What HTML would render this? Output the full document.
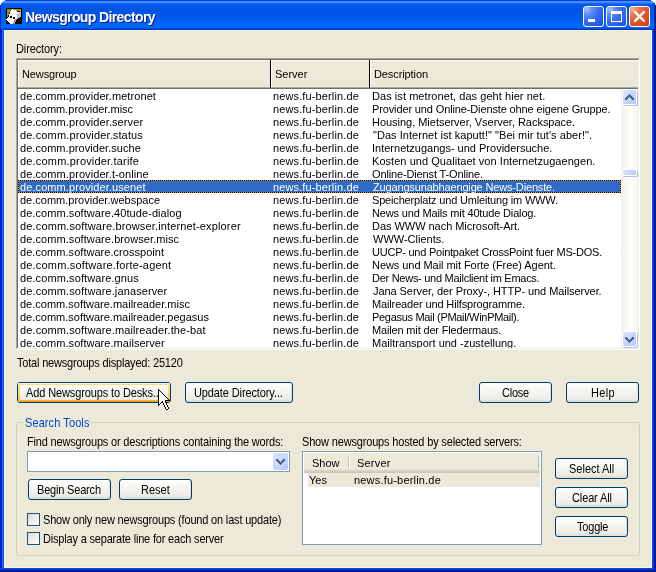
<!DOCTYPE html><html><head><meta charset="utf-8"><style>
html,body{margin:0;padding:0;}body{width:656px;height:572px;position:relative;overflow:hidden;background:#fff;font-family:'Liberation Sans',sans-serif;}
div{box-sizing:border-box;}.t{position:absolute;white-space:pre;will-change:transform;}
.btn{position:absolute;border:1px solid #003C74;border-radius:3px;background:linear-gradient(180deg,#FFFFFF 0%,#F6F5F1 40%,#ECEBE5 85%,#D8D2C6 100%);box-shadow:inset -1px -1px 0 #E3E0D6;}
</style></head><body>
<div style="position:absolute;left:0;top:0;width:656px;height:572px;overflow:hidden;background:#0831D9;">
<div style="position:absolute;left:0;top:0;width:656px;height:30px;background:linear-gradient(180deg,#0A3ED6 0px,#0A3ED6 1px,#3D8FFF 1px,#3D8FFF 3px,#1A6CF2 3px,#0558E8 5px,#0054E3 10px,#0058EA 17px,#0064FB 22px,#0068FF 26px,#0064FA 28px,#0050DE 28px,#0050DE 29px,#0034B8 29px,#0034B8 30px);"></div>
<div style="position:absolute;left:0;top:29px;width:4px;height:540px;background:linear-gradient(90deg,#0010C8 0,#0010C8 1px,#0030D8 1px,#0030D8 2px,#1A6EF0 2px,#1A6EF0 3px,#0850E0 3px);"></div>
<div style="position:absolute;left:0;top:568px;width:656px;height:4px;background:linear-gradient(180deg,#0044F0 0,#0044F0 1px,#0036CC 1px,#0036CC 2px,#0020A0 2px,#0020A0 3px,#001488 3px);"></div>
<div style="position:absolute;left:652px;top:29px;width:4px;height:540px;background:linear-gradient(90deg,#0046F8 0,#0046F8 1px,#0038D8 1px,#0038D8 2px,#0020A8 2px,#0020A8 3px,#001488 3px);"></div>
<div style="position:absolute;left:654px;top:568px;width:1px;height:4px;background:#001C9C;"></div>
<div style="position:absolute;left:655px;top:568px;width:1px;height:4px;background:#001488;"></div>
</div>
<div style="position:absolute;left:0px;top:3px;width:1px;height:27px;background:rgba(0,15,150,0.55);"></div>
<div style="position:absolute;left:655px;top:3px;width:1px;height:27px;background:rgba(0,10,110,0.85);"></div>
<div style="position:absolute;left:654px;top:3px;width:1px;height:27px;background:rgba(0,20,140,0.6);"></div>
<div style="position:absolute;left:0px;top:0px;width:5px;height:1px;background:#fff;"></div>
<div style="position:absolute;left:651px;top:0px;width:5px;height:1px;background:#fff;"></div>
<div style="position:absolute;left:0px;top:1px;width:3px;height:1px;background:#fff;"></div>
<div style="position:absolute;left:653px;top:1px;width:3px;height:1px;background:#fff;"></div>
<div style="position:absolute;left:0px;top:2px;width:2px;height:1px;background:#fff;"></div>
<div style="position:absolute;left:654px;top:2px;width:2px;height:1px;background:#fff;"></div>
<div style="position:absolute;left:0px;top:3px;width:1px;height:2px;background:#fff;"></div>
<div style="position:absolute;left:655px;top:3px;width:1px;height:2px;background:#fff;"></div>
<div style="position:absolute;left:4px;top:30px;width:648px;height:538px;background:#ECE9D8;border:1px solid #FCF7E2;"></div>
<svg style="position:absolute;left:6px;top:8px" width="16" height="16" viewBox="0 0 16 16" shape-rendering="crispEdges"><rect x="0" y="0" width="1" height="1" fill="#000"/><rect x="1" y="0" width="1" height="1" fill="#000"/><rect x="2" y="0" width="1" height="1" fill="#000"/><rect x="3" y="0" width="1" height="1" fill="#000"/><rect x="4" y="0" width="1" height="1" fill="#000"/><rect x="5" y="0" width="1" height="1" fill="#000"/><rect x="6" y="0" width="1" height="1" fill="#000"/><rect x="7" y="0" width="1" height="1" fill="#000"/><rect x="8" y="0" width="1" height="1" fill="#000"/><rect x="9" y="0" width="1" height="1" fill="#000"/><rect x="10" y="0" width="1" height="1" fill="#000"/><rect x="11" y="0" width="1" height="1" fill="#000"/><rect x="12" y="0" width="1" height="1" fill="#000"/><rect x="13" y="0" width="1" height="1" fill="#000"/><rect x="14" y="0" width="1" height="1" fill="#000"/><rect x="15" y="0" width="1" height="1" fill="#000"/><rect x="0" y="1" width="1" height="1" fill="#000"/><rect x="1" y="1" width="1" height="1" fill="#9E9B06"/><rect x="2" y="1" width="1" height="1" fill="#9E9B06"/><rect x="3" y="1" width="1" height="1" fill="#9E9B06"/><rect x="4" y="1" width="1" height="1" fill="#9E9B06"/><rect x="5" y="1" width="1" height="1" fill="#9E9B06"/><rect x="6" y="1" width="1" height="1" fill="#fff"/><rect x="7" y="1" width="1" height="1" fill="#9E9B06"/><rect x="8" y="1" width="1" height="1" fill="#9E9B06"/><rect x="9" y="1" width="1" height="1" fill="#9E9B06"/><rect x="10" y="1" width="1" height="1" fill="#9E9B06"/><rect x="11" y="1" width="1" height="1" fill="#9E9B06"/><rect x="12" y="1" width="1" height="1" fill="#9E9B06"/><rect x="13" y="1" width="1" height="1" fill="#9E9B06"/><rect x="14" y="1" width="1" height="1" fill="#9E9B06"/><rect x="15" y="1" width="1" height="1" fill="#000"/><rect x="0" y="2" width="1" height="1" fill="#000"/><rect x="1" y="2" width="1" height="1" fill="#9E9B06"/><rect x="2" y="2" width="1" height="1" fill="#9E9B06"/><rect x="3" y="2" width="1" height="1" fill="#9E9B06"/><rect x="4" y="2" width="1" height="1" fill="#000"/><rect x="5" y="2" width="1" height="1" fill="#fff"/><rect x="6" y="2" width="1" height="1" fill="#fff"/><rect x="7" y="2" width="1" height="1" fill="#fff"/><rect x="8" y="2" width="1" height="1" fill="#fff"/><rect x="9" y="2" width="1" height="1" fill="#fff"/><rect x="10" y="2" width="1" height="1" fill="#9E9B06"/><rect x="11" y="2" width="1" height="1" fill="#9E9B06"/><rect x="12" y="2" width="1" height="1" fill="#9E9B06"/><rect x="13" y="2" width="1" height="1" fill="#9E9B06"/><rect x="14" y="2" width="1" height="1" fill="#9E9B06"/><rect x="15" y="2" width="1" height="1" fill="#000"/><rect x="0" y="3" width="1" height="1" fill="#000"/><rect x="1" y="3" width="1" height="1" fill="#9E9B06"/><rect x="2" y="3" width="1" height="1" fill="#9E9B06"/><rect x="3" y="3" width="1" height="1" fill="#9E9B06"/><rect x="4" y="3" width="1" height="1" fill="#fff"/><rect x="5" y="3" width="1" height="1" fill="#fff"/><rect x="6" y="3" width="1" height="1" fill="#fff"/><rect x="7" y="3" width="1" height="1" fill="#fff"/><rect x="8" y="3" width="1" height="1" fill="#fff"/><rect x="9" y="3" width="1" height="1" fill="#fff"/><rect x="10" y="3" width="1" height="1" fill="#fff"/><rect x="11" y="3" width="1" height="1" fill="#000"/><rect x="12" y="3" width="1" height="1" fill="#000"/><rect x="13" y="3" width="1" height="1" fill="#000"/><rect x="14" y="3" width="1" height="1" fill="#9E9B06"/><rect x="15" y="3" width="1" height="1" fill="#000"/><rect x="0" y="4" width="1" height="1" fill="#000"/><rect x="1" y="4" width="1" height="1" fill="#9E9B06"/><rect x="2" y="4" width="1" height="1" fill="#9E9B06"/><rect x="3" y="4" width="1" height="1" fill="#000"/><rect x="4" y="4" width="1" height="1" fill="#fff"/><rect x="5" y="4" width="1" height="1" fill="#fff"/><rect x="6" y="4" width="1" height="1" fill="#fff"/><rect x="7" y="4" width="1" height="1" fill="#fff"/><rect x="8" y="4" width="1" height="1" fill="#fff"/><rect x="9" y="4" width="1" height="1" fill="#fff"/><rect x="10" y="4" width="1" height="1" fill="#fff"/><rect x="11" y="4" width="1" height="1" fill="#fff"/><rect x="12" y="4" width="1" height="1" fill="#D6D6D6"/><rect x="13" y="4" width="1" height="1" fill="#D6D6D6"/><rect x="14" y="4" width="1" height="1" fill="#D6D6D6"/><rect x="15" y="4" width="1" height="1" fill="#000"/><rect x="0" y="5" width="1" height="1" fill="#000"/><rect x="1" y="5" width="1" height="1" fill="#9E9B06"/><rect x="2" y="5" width="1" height="1" fill="#9E9B06"/><rect x="3" y="5" width="1" height="1" fill="#000"/><rect x="4" y="5" width="1" height="1" fill="#fff"/><rect x="5" y="5" width="1" height="1" fill="#fff"/><rect x="6" y="5" width="1" height="1" fill="#fff"/><rect x="7" y="5" width="1" height="1" fill="#fff"/><rect x="8" y="5" width="1" height="1" fill="#fff"/><rect x="9" y="5" width="1" height="1" fill="#fff"/><rect x="10" y="5" width="1" height="1" fill="#fff"/><rect x="11" y="5" width="1" height="1" fill="#fff"/><rect x="12" y="5" width="1" height="1" fill="#D6D6D6"/><rect x="13" y="5" width="1" height="1" fill="#BDBDBD"/><rect x="14" y="5" width="1" height="1" fill="#BDBDBD"/><rect x="15" y="5" width="1" height="1" fill="#000"/><rect x="0" y="6" width="1" height="1" fill="#000"/><rect x="1" y="6" width="1" height="1" fill="#9E9B06"/><rect x="2" y="6" width="1" height="1" fill="#9E9B06"/><rect x="3" y="6" width="1" height="1" fill="#fff"/><rect x="4" y="6" width="1" height="1" fill="#fff"/><rect x="5" y="6" width="1" height="1" fill="#fff"/><rect x="6" y="6" width="1" height="1" fill="#fff"/><rect x="7" y="6" width="1" height="1" fill="#fff"/><rect x="8" y="6" width="1" height="1" fill="#fff"/><rect x="9" y="6" width="1" height="1" fill="#fff"/><rect x="10" y="6" width="1" height="1" fill="#fff"/><rect x="11" y="6" width="1" height="1" fill="#BDBDBD"/><rect x="12" y="6" width="1" height="1" fill="#BDBDBD"/><rect x="13" y="6" width="1" height="1" fill="#BDBDBD"/><rect x="14" y="6" width="1" height="1" fill="#BDBDBD"/><rect x="15" y="6" width="1" height="1" fill="#000"/><rect x="0" y="7" width="1" height="1" fill="#000"/><rect x="1" y="7" width="1" height="1" fill="#9E9B06"/><rect x="2" y="7" width="1" height="1" fill="#000"/><rect x="3" y="7" width="1" height="1" fill="#fff"/><rect x="4" y="7" width="1" height="1" fill="#fff"/><rect x="5" y="7" width="1" height="1" fill="#fff"/><rect x="6" y="7" width="1" height="1" fill="#fff"/><rect x="7" y="7" width="1" height="1" fill="#fff"/><rect x="8" y="7" width="1" height="1" fill="#fff"/><rect x="9" y="7" width="1" height="1" fill="#fff"/><rect x="10" y="7" width="1" height="1" fill="#fff"/><rect x="11" y="7" width="1" height="1" fill="#BDBDBD"/><rect x="12" y="7" width="1" height="1" fill="#BDBDBD"/><rect x="13" y="7" width="1" height="1" fill="#BDBDBD"/><rect x="14" y="7" width="1" height="1" fill="#BDBDBD"/><rect x="15" y="7" width="1" height="1" fill="#000"/><rect x="0" y="8" width="1" height="1" fill="#000"/><rect x="1" y="8" width="1" height="1" fill="#9E9B06"/><rect x="2" y="8" width="1" height="1" fill="#000"/><rect x="3" y="8" width="1" height="1" fill="#fff"/><rect x="4" y="8" width="1" height="1" fill="#000"/><rect x="5" y="8" width="1" height="1" fill="#000"/><rect x="6" y="8" width="1" height="1" fill="#fff"/><rect x="7" y="8" width="1" height="1" fill="#fff"/><rect x="8" y="8" width="1" height="1" fill="#fff"/><rect x="9" y="8" width="1" height="1" fill="#fff"/><rect x="10" y="8" width="1" height="1" fill="#fff"/><rect x="11" y="8" width="1" height="1" fill="#BDBDBD"/><rect x="12" y="8" width="1" height="1" fill="#BDBDBD"/><rect x="13" y="8" width="1" height="1" fill="#BDBDBD"/><rect x="14" y="8" width="1" height="1" fill="#BDBDBD"/><rect x="15" y="8" width="1" height="1" fill="#000"/><rect x="0" y="9" width="1" height="1" fill="#000"/><rect x="1" y="9" width="1" height="1" fill="#000"/><rect x="2" y="9" width="1" height="1" fill="#fff"/><rect x="3" y="9" width="1" height="1" fill="#fff"/><rect x="4" y="9" width="1" height="1" fill="#000"/><rect x="5" y="9" width="1" height="1" fill="#000"/><rect x="6" y="9" width="1" height="1" fill="#fff"/><rect x="7" y="9" width="1" height="1" fill="#000"/><rect x="8" y="9" width="1" height="1" fill="#000"/><rect x="9" y="9" width="1" height="1" fill="#fff"/><rect x="10" y="9" width="1" height="1" fill="#fff"/><rect x="11" y="9" width="1" height="1" fill="#BDBDBD"/><rect x="12" y="9" width="1" height="1" fill="#BDBDBD"/><rect x="13" y="9" width="1" height="1" fill="#BDBDBD"/><rect x="14" y="9" width="1" height="1" fill="#000"/><rect x="15" y="9" width="1" height="1" fill="#000"/><rect x="0" y="10" width="1" height="1" fill="#000"/><rect x="1" y="10" width="1" height="1" fill="#fff"/><rect x="2" y="10" width="1" height="1" fill="#fff"/><rect x="3" y="10" width="1" height="1" fill="#fff"/><rect x="4" y="10" width="1" height="1" fill="#fff"/><rect x="5" y="10" width="1" height="1" fill="#fff"/><rect x="6" y="10" width="1" height="1" fill="#fff"/><rect x="7" y="10" width="1" height="1" fill="#000"/><rect x="8" y="10" width="1" height="1" fill="#000"/><rect x="9" y="10" width="1" height="1" fill="#fff"/><rect x="10" y="10" width="1" height="1" fill="#BDBDBD"/><rect x="11" y="10" width="1" height="1" fill="#BDBDBD"/><rect x="12" y="10" width="1" height="1" fill="#000"/><rect x="13" y="10" width="1" height="1" fill="#000"/><rect x="14" y="10" width="1" height="1" fill="#000"/><rect x="15" y="10" width="1" height="1" fill="#000"/><rect x="0" y="11" width="1" height="1" fill="#fff"/><rect x="1" y="11" width="1" height="1" fill="#fff"/><rect x="2" y="11" width="1" height="1" fill="#fff"/><rect x="3" y="11" width="1" height="1" fill="#fff"/><rect x="4" y="11" width="1" height="1" fill="#fff"/><rect x="5" y="11" width="1" height="1" fill="#fff"/><rect x="6" y="11" width="1" height="1" fill="#fff"/><rect x="7" y="11" width="1" height="1" fill="#fff"/><rect x="8" y="11" width="1" height="1" fill="#fff"/><rect x="9" y="11" width="1" height="1" fill="#9A9A9A"/><rect x="10" y="11" width="1" height="1" fill="#9A9A9A"/><rect x="11" y="11" width="1" height="1" fill="#000"/><rect x="12" y="11" width="1" height="1" fill="#000"/><rect x="13" y="11" width="1" height="1" fill="#000"/><rect x="14" y="11" width="1" height="1" fill="#000"/><rect x="15" y="11" width="1" height="1" fill="#000"/><rect x="0" y="12" width="1" height="1" fill="#000"/><rect x="1" y="12" width="1" height="1" fill="#fff"/><rect x="2" y="12" width="1" height="1" fill="#fff"/><rect x="3" y="12" width="1" height="1" fill="#fff"/><rect x="4" y="12" width="1" height="1" fill="#fff"/><rect x="5" y="12" width="1" height="1" fill="#fff"/><rect x="6" y="12" width="1" height="1" fill="#fff"/><rect x="7" y="12" width="1" height="1" fill="#fff"/><rect x="8" y="12" width="1" height="1" fill="#9A9A9A"/><rect x="9" y="12" width="1" height="1" fill="#9A9A9A"/><rect x="10" y="12" width="1" height="1" fill="#000"/><rect x="11" y="12" width="1" height="1" fill="#000"/><rect x="12" y="12" width="1" height="1" fill="#000"/><rect x="13" y="12" width="1" height="1" fill="#000"/><rect x="14" y="12" width="1" height="1" fill="#000"/><rect x="15" y="12" width="1" height="1" fill="#000"/><rect x="0" y="13" width="1" height="1" fill="#000"/><rect x="1" y="13" width="1" height="1" fill="#000"/><rect x="2" y="13" width="1" height="1" fill="#fff"/><rect x="3" y="13" width="1" height="1" fill="#fff"/><rect x="4" y="13" width="1" height="1" fill="#fff"/><rect x="5" y="13" width="1" height="1" fill="#fff"/><rect x="6" y="13" width="1" height="1" fill="#fff"/><rect x="7" y="13" width="1" height="1" fill="#fff"/><rect x="8" y="13" width="1" height="1" fill="#9A9A9A"/><rect x="9" y="13" width="1" height="1" fill="#9A9A9A"/><rect x="10" y="13" width="1" height="1" fill="#000"/><rect x="11" y="13" width="1" height="1" fill="#000"/><rect x="12" y="13" width="1" height="1" fill="#000"/><rect x="13" y="13" width="1" height="1" fill="#000"/><rect x="14" y="13" width="1" height="1" fill="#000"/><rect x="15" y="13" width="1" height="1" fill="#000"/><rect x="0" y="14" width="1" height="1" fill="#000"/><rect x="1" y="14" width="1" height="1" fill="#000"/><rect x="2" y="14" width="1" height="1" fill="#000"/><rect x="3" y="14" width="1" height="1" fill="#fff"/><rect x="4" y="14" width="1" height="1" fill="#fff"/><rect x="5" y="14" width="1" height="1" fill="#fff"/><rect x="6" y="14" width="1" height="1" fill="#fff"/><rect x="7" y="14" width="1" height="1" fill="#9A9A9A"/><rect x="8" y="14" width="1" height="1" fill="#9A9A9A"/><rect x="9" y="14" width="1" height="1" fill="#000"/><rect x="10" y="14" width="1" height="1" fill="#000"/><rect x="11" y="14" width="1" height="1" fill="#000"/><rect x="12" y="14" width="1" height="1" fill="#000"/><rect x="13" y="14" width="1" height="1" fill="#000"/><rect x="14" y="14" width="1" height="1" fill="#000"/><rect x="15" y="14" width="1" height="1" fill="#000"/><rect x="0" y="15" width="1" height="1" fill="#000"/><rect x="1" y="15" width="1" height="1" fill="#000"/><rect x="2" y="15" width="1" height="1" fill="#000"/><rect x="3" y="15" width="1" height="1" fill="#000"/><rect x="4" y="15" width="1" height="1" fill="#fff"/><rect x="5" y="15" width="1" height="1" fill="#fff"/><rect x="6" y="15" width="1" height="1" fill="#fff"/><rect x="7" y="15" width="1" height="1" fill="#9A9A9A"/><rect x="8" y="15" width="1" height="1" fill="#9A9A9A"/><rect x="9" y="15" width="1" height="1" fill="#000"/><rect x="10" y="15" width="1" height="1" fill="#000"/><rect x="11" y="15" width="1" height="1" fill="#000"/><rect x="12" y="15" width="1" height="1" fill="#000"/><rect x="13" y="15" width="1" height="1" fill="#000"/><rect x="14" y="15" width="1" height="1" fill="#000"/><rect x="15" y="15" width="1" height="1" fill="#000"/></svg>
<div class="t" style="left:25px;top:8px;font-size:14px;line-height:18px;color:#fff;font-weight:bold;letter-spacing:-0.611px;text-shadow:1px 1px 0 #0A1883;">Newsgroup Directory</div>
<div style="position:absolute;left:583px;top:6px;width:21px;height:21px;border:1px solid #fff;border-radius:3px;background:radial-gradient(circle at 15% 12%,#A6C4FF 0,#5F8EF8 22%,#3A6CF2 50%,#2A5DEB 75%,#1E4DD6 100%);"><div style="position:absolute;left:4px;top:12px;width:7px;height:3px;background:#fff"></div></div>
<div style="position:absolute;left:606px;top:6px;width:21px;height:21px;border:1px solid #fff;border-radius:3px;background:radial-gradient(circle at 15% 12%,#A6C4FF 0,#5F8EF8 22%,#3A6CF2 50%,#2A5DEB 75%,#1E4DD6 100%);"><div style="position:absolute;left:4px;top:4px;width:11px;height:11px;border:1px solid #fff;border-top-width:3px"></div></div>
<div style="position:absolute;left:629px;top:6px;width:21px;height:21px;border:1px solid #fff;border-radius:3px;background:radial-gradient(circle at 15% 12%,#F5B29A 0,#EA7A55 22%,#E25A30 50%,#DB4A1E 75%,#C43A10 100%);"><svg style="position:absolute;left:4px;top:4px" width="11" height="11" viewBox="0 0 11 11"><path d="M1 1 L10 10 M10 1 L1 10" stroke="#fff" stroke-width="2.4" stroke-linecap="square"/></svg></div>
<div class="t" style="left:16px;top:42px;font-size:11px;line-height:13px;color:#000;font-weight:normal;letter-spacing:-0.111px;transform:scaleY(1.125);transform-origin:0 2px;">Directory:</div>
<div style="position:absolute;left:16px;top:58px;width:624px;height:292px;background:#fff;border-style:solid;border-width:1px;border-color:#ACA899 #FFFFFF #FFFFFF #ACA899;"></div>
<div style="position:absolute;left:17px;top:59px;width:622px;height:290px;border-style:solid;border-width:1px;border-color:#716F64 #F1EFE2 #F1EFE2 #716F64;"></div>
<div style="position:absolute;left:18px;top:60px;width:620px;height:29px;background:#ECE9D8;border-top:1px solid #fff;border-left:1px solid #fff;"></div>
<div style="position:absolute;left:18px;top:87px;width:620px;height:1px;background:#ACA899;"></div>
<div style="position:absolute;left:18px;top:88px;width:620px;height:1px;background:#716F64;"></div>
<div style="position:absolute;left:270px;top:60px;width:1px;height:28px;background:#000;"></div>
<div style="position:absolute;left:271px;top:60px;width:1px;height:27px;background:#fff;"></div>
<div style="position:absolute;left:369px;top:60px;width:1px;height:28px;background:#000;"></div>
<div style="position:absolute;left:370px;top:60px;width:1px;height:27px;background:#fff;"></div>
<div class="t" style="left:22px;top:68px;font-size:11px;line-height:13px;color:#000;font-weight:normal;letter-spacing:-0.125px;">Newsgroup</div>
<div class="t" style="left:275px;top:68px;font-size:11px;line-height:13px;color:#000;font-weight:normal;letter-spacing:0.000px;">Server</div>
<div class="t" style="left:374px;top:68px;font-size:11px;line-height:13px;color:#000;font-weight:normal;letter-spacing:-0.100px;">Description</div>
<div class="t" style="left:20px;top:90px;font-size:11px;line-height:13px;color:#000;font-weight:normal;letter-spacing:0.083px;">de.comm.provider.metronet</div>
<div class="t" style="left:273px;top:90px;font-size:11px;line-height:13px;color:#000;font-weight:normal;letter-spacing:0.125px;">news.fu-berlin.de</div>
<div class="t" style="left:372px;top:90px;font-size:11px;line-height:13px;color:#000;font-weight:normal;letter-spacing:0.057px;">Das ist metronet, das geht hier net.</div>
<div class="t" style="left:20px;top:103px;font-size:11px;line-height:13px;color:#000;font-weight:normal;letter-spacing:0.000px;">de.comm.provider.misc</div>
<div class="t" style="left:273px;top:103px;font-size:11px;line-height:13px;color:#000;font-weight:normal;letter-spacing:0.125px;">news.fu-berlin.de</div>
<div class="t" style="left:372px;top:103px;font-size:11px;line-height:13px;color:#000;font-weight:normal;letter-spacing:-0.130px;">Provider und Online-Dienste ohne eigene Gruppe.</div>
<div class="t" style="left:20px;top:116px;font-size:11px;line-height:13px;color:#000;font-weight:normal;letter-spacing:0.091px;">de.comm.provider.server</div>
<div class="t" style="left:273px;top:116px;font-size:11px;line-height:13px;color:#000;font-weight:normal;letter-spacing:0.125px;">news.fu-berlin.de</div>
<div class="t" style="left:372px;top:116px;font-size:11px;line-height:13px;color:#000;font-weight:normal;letter-spacing:-0.026px;">Housing, Mietserver, Vserver, Rackspace.</div>
<div class="t" style="left:20px;top:129px;font-size:11px;line-height:13px;color:#000;font-weight:normal;letter-spacing:0.136px;">de.comm.provider.status</div>
<div class="t" style="left:273px;top:129px;font-size:11px;line-height:13px;color:#000;font-weight:normal;letter-spacing:0.125px;">news.fu-berlin.de</div>
<div class="t" style="left:373px;top:129px;font-size:11px;line-height:13px;color:#000;font-weight:normal;letter-spacing:0.042px;">"Das Internet ist kaputt!" "Bei mir tut's aber!".</div>
<div class="t" style="left:20px;top:142px;font-size:11px;line-height:13px;color:#000;font-weight:normal;letter-spacing:0.048px;">de.comm.provider.suche</div>
<div class="t" style="left:273px;top:142px;font-size:11px;line-height:13px;color:#000;font-weight:normal;letter-spacing:0.125px;">news.fu-berlin.de</div>
<div class="t" style="left:372px;top:142px;font-size:11px;line-height:13px;color:#000;font-weight:normal;letter-spacing:0.000px;">Internetzugangs- und Providersuche.</div>
<div class="t" style="left:20px;top:155px;font-size:11px;line-height:13px;color:#000;font-weight:normal;letter-spacing:0.182px;">de.comm.provider.tarife</div>
<div class="t" style="left:273px;top:155px;font-size:11px;line-height:13px;color:#000;font-weight:normal;letter-spacing:0.125px;">news.fu-berlin.de</div>
<div class="t" style="left:372px;top:155px;font-size:11px;line-height:13px;color:#000;font-weight:normal;letter-spacing:0.048px;">Kosten und Qualitaet von Internetzugaengen.</div>
<div class="t" style="left:20px;top:168px;font-size:11px;line-height:13px;color:#000;font-weight:normal;letter-spacing:0.083px;">de.comm.provider.t-online</div>
<div class="t" style="left:273px;top:168px;font-size:11px;line-height:13px;color:#000;font-weight:normal;letter-spacing:0.125px;">news.fu-berlin.de</div>
<div class="t" style="left:372px;top:168px;font-size:11px;line-height:13px;color:#000;font-weight:normal;letter-spacing:-0.136px;">Online-Dienst T-Online.</div>
<div style="position:absolute;left:18px;top:180px;width:603px;height:13px;background:#316AC5;"></div>
<div style="position:absolute;left:18px;top:180px;width:603px;height:13px;background:repeating-linear-gradient(90deg,#000 0 1px,#CE953A 1px 2px) top/100% 1px no-repeat,repeating-linear-gradient(90deg,#000 0 1px,#CE953A 1px 2px) bottom/100% 1px no-repeat,repeating-linear-gradient(180deg,#000 0 1px,#CE953A 1px 2px) left/1px 100% no-repeat,repeating-linear-gradient(180deg,#000 0 1px,#CE953A 1px 2px) right/1px 100% no-repeat;"></div>
<div class="t" style="left:20px;top:181px;font-size:11px;line-height:13px;color:#fff;font-weight:normal;letter-spacing:0.091px;">de.comm.provider.usenet</div>
<div class="t" style="left:273px;top:181px;font-size:11px;line-height:13px;color:#fff;font-weight:normal;letter-spacing:0.125px;">news.fu-berlin.de</div>
<div class="t" style="left:373px;top:181px;font-size:11px;line-height:13px;color:#fff;font-weight:normal;letter-spacing:-0.156px;">Zugangsunabhaengige News-Dienste.</div>
<div class="t" style="left:20px;top:194px;font-size:11px;line-height:13px;color:#000;font-weight:normal;letter-spacing:0.000px;">de.comm.provider.webspace</div>
<div class="t" style="left:273px;top:194px;font-size:11px;line-height:13px;color:#000;font-weight:normal;letter-spacing:0.125px;">news.fu-berlin.de</div>
<div class="t" style="left:372px;top:194px;font-size:11px;line-height:13px;color:#000;font-weight:normal;letter-spacing:-0.176px;">Speicherplatz und Umleitung im WWW.</div>
<div class="t" style="left:20px;top:207px;font-size:11px;line-height:13px;color:#000;font-weight:normal;letter-spacing:0.069px;">de.comm.software.40tude-dialog</div>
<div class="t" style="left:273px;top:207px;font-size:11px;line-height:13px;color:#000;font-weight:normal;letter-spacing:0.125px;">news.fu-berlin.de</div>
<div class="t" style="left:372px;top:207px;font-size:11px;line-height:13px;color:#000;font-weight:normal;letter-spacing:-0.156px;">News und Mails mit 40tude Dialog.</div>
<div class="t" style="left:20px;top:220px;font-size:11px;line-height:13px;color:#000;font-weight:normal;letter-spacing:0.146px;">de.comm.software.browser.internet-explorer</div>
<div class="t" style="left:273px;top:220px;font-size:11px;line-height:13px;color:#000;font-weight:normal;letter-spacing:0.125px;">news.fu-berlin.de</div>
<div class="t" style="left:372px;top:220px;font-size:11px;line-height:13px;color:#000;font-weight:normal;letter-spacing:-0.038px;">Das WWW nach Microsoft-Art.</div>
<div class="t" style="left:20px;top:233px;font-size:11px;line-height:13px;color:#000;font-weight:normal;letter-spacing:0.071px;">de.comm.software.browser.misc</div>
<div class="t" style="left:273px;top:233px;font-size:11px;line-height:13px;color:#000;font-weight:normal;letter-spacing:0.125px;">news.fu-berlin.de</div>
<div class="t" style="left:373px;top:233px;font-size:11px;line-height:13px;color:#000;font-weight:normal;letter-spacing:0.000px;">WWW-Clients.</div>
<div class="t" style="left:20px;top:246px;font-size:11px;line-height:13px;color:#000;font-weight:normal;letter-spacing:0.038px;">de.comm.software.crosspoint</div>
<div class="t" style="left:273px;top:246px;font-size:11px;line-height:13px;color:#000;font-weight:normal;letter-spacing:0.125px;">news.fu-berlin.de</div>
<div class="t" style="left:372px;top:246px;font-size:11px;line-height:13px;color:#000;font-weight:normal;letter-spacing:-0.233px;">UUCP- und Pointpaket CrossPoint fuer MS-DOS.</div>
<div class="t" style="left:20px;top:259px;font-size:11px;line-height:13px;color:#000;font-weight:normal;letter-spacing:0.185px;">de.comm.software.forte-agent</div>
<div class="t" style="left:273px;top:259px;font-size:11px;line-height:13px;color:#000;font-weight:normal;letter-spacing:0.125px;">news.fu-berlin.de</div>
<div class="t" style="left:372px;top:259px;font-size:11px;line-height:13px;color:#000;font-weight:normal;letter-spacing:-0.056px;">News und Mail mit Forte (Free) Agent.</div>
<div class="t" style="left:20px;top:272px;font-size:11px;line-height:13px;color:#000;font-weight:normal;letter-spacing:0.100px;">de.comm.software.gnus</div>
<div class="t" style="left:273px;top:272px;font-size:11px;line-height:13px;color:#000;font-weight:normal;letter-spacing:0.125px;">news.fu-berlin.de</div>
<div class="t" style="left:372px;top:272px;font-size:11px;line-height:13px;color:#000;font-weight:normal;letter-spacing:-0.273px;">Der News- und Mailclient im Emacs.</div>
<div class="t" style="left:20px;top:285px;font-size:11px;line-height:13px;color:#000;font-weight:normal;letter-spacing:0.115px;">de.comm.software.janaserver</div>
<div class="t" style="left:273px;top:285px;font-size:11px;line-height:13px;color:#000;font-weight:normal;letter-spacing:0.125px;">news.fu-berlin.de</div>
<div class="t" style="left:373px;top:285px;font-size:11px;line-height:13px;color:#000;font-weight:normal;letter-spacing:-0.067px;">Jana Server, der Proxy-, HTTP- und Mailserver.</div>
<div class="t" style="left:20px;top:298px;font-size:11px;line-height:13px;color:#000;font-weight:normal;letter-spacing:0.000px;">de.comm.software.mailreader.misc</div>
<div class="t" style="left:273px;top:298px;font-size:11px;line-height:13px;color:#000;font-weight:normal;letter-spacing:0.125px;">news.fu-berlin.de</div>
<div class="t" style="left:372px;top:298px;font-size:11px;line-height:13px;color:#000;font-weight:normal;letter-spacing:-0.138px;">Mailreader und Hilfsprogramme.</div>
<div class="t" style="left:20px;top:311px;font-size:11px;line-height:13px;color:#000;font-weight:normal;letter-spacing:0.000px;">de.comm.software.mailreader.pegasus</div>
<div class="t" style="left:273px;top:311px;font-size:11px;line-height:13px;color:#000;font-weight:normal;letter-spacing:0.125px;">news.fu-berlin.de</div>
<div class="t" style="left:372px;top:311px;font-size:11px;line-height:13px;color:#000;font-weight:normal;letter-spacing:-0.310px;">Pegasus Mail (PMail/WinPMail).</div>
<div class="t" style="left:20px;top:324px;font-size:11px;line-height:13px;color:#000;font-weight:normal;letter-spacing:0.118px;">de.comm.software.mailreader.the-bat</div>
<div class="t" style="left:273px;top:324px;font-size:11px;line-height:13px;color:#000;font-weight:normal;letter-spacing:0.125px;">news.fu-berlin.de</div>
<div class="t" style="left:372px;top:324px;font-size:11px;line-height:13px;color:#000;font-weight:normal;letter-spacing:-0.160px;">Mailen mit der Fledermaus.</div>
<div class="t" style="left:20px;top:337px;font-size:11px;line-height:13px;color:#000;font-weight:normal;letter-spacing:0.038px;">de.comm.software.mailserver</div>
<div class="t" style="left:273px;top:337px;font-size:11px;line-height:13px;color:#000;font-weight:normal;letter-spacing:0.125px;">news.fu-berlin.de</div>
<div class="t" style="left:372px;top:337px;font-size:11px;line-height:13px;color:#000;font-weight:normal;letter-spacing:0.000px;">Mailtransport und -zustellung.</div>
<div style="position:absolute;left:17px;top:348px;width:622px;height:1px;background:#F1EFE2;"></div>
<div style="position:absolute;left:16px;top:349px;width:624px;height:1px;background:#FFFFFF;"></div>
<div style="position:absolute;left:621px;top:89px;width:17px;height:259px;background:linear-gradient(90deg,#F3F1EC 0,#FEFEFB 60%,#F5F4EF 100%);"></div>
<div style="position:absolute;left:622px;top:89px;width:15px;height:16px;border:1px solid #fff;border-radius:2px;background:linear-gradient(135deg,#DCE6FD 0%,#C6D6FC 50%,#B6CAFA 100%);box-shadow:1px 1px 0 #A9C0EE;"></div>
<svg style="position:absolute;left:625px;top:94px" width="9" height="6" viewBox="0 0 9 6" shape-rendering="crispEdges" fill="#4D6185"><rect x="4" y="0" width="1" height="1"/><rect x="3" y="1" width="1" height="1"/><rect x="4" y="1" width="1" height="1"/><rect x="5" y="1" width="1" height="1"/><rect x="2" y="2" width="1" height="1"/><rect x="3" y="2" width="1" height="1"/><rect x="4" y="2" width="1" height="1"/><rect x="5" y="2" width="1" height="1"/><rect x="6" y="2" width="1" height="1"/><rect x="1" y="3" width="1" height="1"/><rect x="2" y="3" width="1" height="1"/><rect x="3" y="3" width="1" height="1"/><rect x="5" y="3" width="1" height="1"/><rect x="6" y="3" width="1" height="1"/><rect x="7" y="3" width="1" height="1"/><rect x="0" y="4" width="1" height="1"/><rect x="1" y="4" width="1" height="1"/><rect x="2" y="4" width="1" height="1"/><rect x="6" y="4" width="1" height="1"/><rect x="7" y="4" width="1" height="1"/><rect x="8" y="4" width="1" height="1"/><rect x="0" y="5" width="1" height="1"/><rect x="1" y="5" width="1" height="1"/><rect x="7" y="5" width="1" height="1"/><rect x="8" y="5" width="1" height="1"/></svg>
<div style="position:absolute;left:622px;top:331px;width:15px;height:16px;border:1px solid #fff;border-radius:2px;background:linear-gradient(135deg,#DCE6FD 0%,#C6D6FC 50%,#B6CAFA 100%);box-shadow:1px 1px 0 #A9C0EE;"></div>
<svg style="position:absolute;left:625px;top:337px" width="9" height="6" viewBox="0 0 9 6" shape-rendering="crispEdges" fill="#4D6185"><rect x="0" y="0" width="1" height="1"/><rect x="1" y="0" width="1" height="1"/><rect x="7" y="0" width="1" height="1"/><rect x="8" y="0" width="1" height="1"/><rect x="0" y="1" width="1" height="1"/><rect x="1" y="1" width="1" height="1"/><rect x="2" y="1" width="1" height="1"/><rect x="6" y="1" width="1" height="1"/><rect x="7" y="1" width="1" height="1"/><rect x="8" y="1" width="1" height="1"/><rect x="1" y="2" width="1" height="1"/><rect x="2" y="2" width="1" height="1"/><rect x="3" y="2" width="1" height="1"/><rect x="5" y="2" width="1" height="1"/><rect x="6" y="2" width="1" height="1"/><rect x="7" y="2" width="1" height="1"/><rect x="2" y="3" width="1" height="1"/><rect x="3" y="3" width="1" height="1"/><rect x="4" y="3" width="1" height="1"/><rect x="5" y="3" width="1" height="1"/><rect x="6" y="3" width="1" height="1"/><rect x="3" y="4" width="1" height="1"/><rect x="4" y="4" width="1" height="1"/><rect x="5" y="4" width="1" height="1"/><rect x="4" y="5" width="1" height="1"/></svg>
<div style="position:absolute;left:622px;top:169px;width:15px;height:7px;border:1px solid #fff;border-radius:2px;background:linear-gradient(135deg,#D4E0FD,#BACDFB);box-shadow:1px 1px 0 #A9C0EE;"></div>
<div class="t" style="left:17px;top:356px;font-size:11px;line-height:13px;color:#000;font-weight:normal;letter-spacing:-0.188px;transform:scaleY(1.125);transform-origin:0 2px;">Total newsgroups displayed: 25120</div>
<div class="btn" style="left:17px;top:382px;width:154px;height:21px;"></div>
<div style="position:absolute;left:18px;top:383px;width:152px;height:1px;background:#FFF0CF;border-radius:2px 2px 0 0"></div>
<div style="position:absolute;left:18px;top:384px;width:152px;height:1px;background:#FCD88C;"></div>
<div style="position:absolute;left:18px;top:384px;width:2px;height:17px;background:linear-gradient(180deg,#FCE2A4,#F6BE52);"></div>
<div style="position:absolute;left:168px;top:384px;width:2px;height:17px;background:linear-gradient(180deg,#FCE2A4,#F6BE52);"></div>
<div style="position:absolute;left:18px;top:400px;width:152px;height:1px;background:#F8B330;"></div>
<div style="position:absolute;left:18px;top:401px;width:152px;height:1px;background:#E5A01A;border-radius:0 0 2px 2px"></div>
<div class="t" style="left:26px;top:386px;font-size:11px;line-height:13px;color:#000;font-weight:normal;letter-spacing:-0.120px;transform:scaleY(1.125);transform-origin:0 2px;">Add Newsgroups to Desks...</div>
<div class="btn" style="left:185px;top:382px;width:108px;height:21px;"></div>
<div class="t" style="left:194px;top:386px;font-size:11px;line-height:13px;color:#000;font-weight:normal;letter-spacing:-0.111px;transform:scaleY(1.125);transform-origin:0 2px;">Update Directory...</div>
<div class="btn" style="left:479px;top:382px;width:73px;height:21px;"></div>
<div class="t" style="left:502px;top:386px;font-size:11px;line-height:13px;color:#000;font-weight:normal;letter-spacing:-0.250px;transform:scaleY(1.125);transform-origin:0 2px;">Close</div>
<div class="btn" style="left:566px;top:382px;width:73px;height:21px;"></div>
<div class="t" style="left:591px;top:386px;font-size:11px;line-height:13px;color:#000;font-weight:normal;letter-spacing:0.333px;transform:scaleY(1.125);transform-origin:0 2px;">Help</div>
<div style="position:absolute;left:16px;top:422px;width:624px;height:134px;border:1px solid #D0D0BF;border-radius:3px;"></div>
<div style="position:absolute;left:23px;top:418px;width:67px;height:11px;background:#ECE9D8;"></div>
<div class="t" style="left:25px;top:416px;font-size:11px;line-height:13px;color:#0046D5;font-weight:normal;letter-spacing:0.091px;transform:scaleY(1.125);transform-origin:0 2px;">Search Tools</div>
<div class="t" style="left:27px;top:435px;font-size:11px;line-height:13px;color:#000;font-weight:normal;letter-spacing:-0.173px;transform:scaleY(1.125);transform-origin:0 2px;">Find newsgroups or descriptions containing the words:</div>
<div style="position:absolute;left:27px;top:451px;width:263px;height:21px;background:#fff;border:1px solid #7F9DB9;"></div>
<div style="position:absolute;left:273px;top:453px;width:15px;height:17px;border-radius:2px;background:linear-gradient(135deg,#DCE6FD 0%,#C6D6FC 50%,#B6CAFA 100%);"></div>
<svg style="position:absolute;left:276px;top:459px" width="9" height="6" viewBox="0 0 9 6" shape-rendering="crispEdges" fill="#4D6185"><rect x="0" y="0" width="1" height="1"/><rect x="1" y="0" width="1" height="1"/><rect x="7" y="0" width="1" height="1"/><rect x="8" y="0" width="1" height="1"/><rect x="0" y="1" width="1" height="1"/><rect x="1" y="1" width="1" height="1"/><rect x="2" y="1" width="1" height="1"/><rect x="6" y="1" width="1" height="1"/><rect x="7" y="1" width="1" height="1"/><rect x="8" y="1" width="1" height="1"/><rect x="1" y="2" width="1" height="1"/><rect x="2" y="2" width="1" height="1"/><rect x="3" y="2" width="1" height="1"/><rect x="5" y="2" width="1" height="1"/><rect x="6" y="2" width="1" height="1"/><rect x="7" y="2" width="1" height="1"/><rect x="2" y="3" width="1" height="1"/><rect x="3" y="3" width="1" height="1"/><rect x="4" y="3" width="1" height="1"/><rect x="5" y="3" width="1" height="1"/><rect x="6" y="3" width="1" height="1"/><rect x="3" y="4" width="1" height="1"/><rect x="4" y="4" width="1" height="1"/><rect x="5" y="4" width="1" height="1"/><rect x="4" y="5" width="1" height="1"/></svg>
<div class="btn" style="left:28px;top:479px;width:83px;height:21px;"></div>
<div class="t" style="left:37px;top:483px;font-size:11px;line-height:13px;color:#000;font-weight:normal;letter-spacing:-0.182px;transform:scaleY(1.125);transform-origin:0 2px;">Begin Search</div>
<div class="btn" style="left:119px;top:479px;width:73px;height:21px;"></div>
<div class="t" style="left:141px;top:483px;font-size:11px;line-height:13px;color:#000;font-weight:normal;letter-spacing:0.000px;transform:scaleY(1.125);transform-origin:0 2px;">Reset</div>
<div style="position:absolute;left:27px;top:513px;width:13px;height:13px;border:1px solid #1C5180;background:linear-gradient(135deg,#DCDCD7 0%,#F0F0EA 60%,#FFFFFF 100%);"></div>
<div class="t" style="left:43px;top:513px;font-size:11px;line-height:13px;color:#000;font-weight:normal;letter-spacing:-0.174px;transform:scaleY(1.125);transform-origin:0 2px;">Show only new newsgroups (found on last update)</div>
<div style="position:absolute;left:27px;top:532px;width:13px;height:13px;border:1px solid #1C5180;background:linear-gradient(135deg,#DCDCD7 0%,#F0F0EA 60%,#FFFFFF 100%);"></div>
<div class="t" style="left:43px;top:532px;font-size:11px;line-height:13px;color:#000;font-weight:normal;letter-spacing:-0.184px;transform:scaleY(1.125);transform-origin:0 2px;">Display a separate line for each server</div>
<div class="t" style="left:302px;top:435px;font-size:11px;line-height:13px;color:#000;font-weight:normal;letter-spacing:-0.167px;transform:scaleY(1.125);transform-origin:0 2px;">Show newsgroups hosted by selected servers:</div>
<div style="position:absolute;left:302px;top:451px;width:240px;height:94px;background:#fff;border:1px solid #7F9DB9;"></div>
<div style="position:absolute;left:304px;top:453px;width:236px;height:20px;background:linear-gradient(180deg,#EBEADB 0,#EBEADB 16px,#E2DECD 17px,#D6D2C2 18px,#CBC7B8 19px);"></div>
<div style="position:absolute;left:348px;top:456px;width:1px;height:13px;background:#C7C5B2;"></div>
<div style="position:absolute;left:349px;top:456px;width:1px;height:13px;background:#fff;"></div>
<div style="position:absolute;left:538px;top:456px;width:1px;height:13px;background:#C7C5B2;"></div>
<div class="t" style="left:312px;top:457px;font-size:11px;line-height:13px;color:#000;font-weight:normal;letter-spacing:0.000px;">Show</div>
<div class="t" style="left:357px;top:457px;font-size:11px;line-height:13px;color:#000;font-weight:normal;letter-spacing:0.200px;">Server</div>
<div style="position:absolute;left:308px;top:473px;width:232px;height:14px;background:#ECE9D8;"></div>
<div class="t" style="left:309px;top:474px;font-size:11px;line-height:13px;color:#000;font-weight:normal;letter-spacing:0.000px;">Yes</div>
<div class="t" style="left:354px;top:474px;font-size:11px;line-height:13px;color:#000;font-weight:normal;letter-spacing:0.188px;">news.fu-berlin.de</div>
<div class="btn" style="left:555px;top:458px;width:73px;height:21px;"></div>
<div class="t" style="left:569px;top:462px;font-size:11px;line-height:13px;color:#000;font-weight:normal;letter-spacing:0.000px;transform:scaleY(1.125);transform-origin:0 2px;">Select All</div>
<div class="btn" style="left:555px;top:487px;width:73px;height:21px;"></div>
<div class="t" style="left:572px;top:491px;font-size:11px;line-height:13px;color:#000;font-weight:normal;letter-spacing:-0.125px;transform:scaleY(1.125);transform-origin:0 2px;">Clear All</div>
<div class="btn" style="left:555px;top:516px;width:73px;height:21px;"></div>
<div class="t" style="left:577px;top:520px;font-size:11px;line-height:13px;color:#000;font-weight:normal;letter-spacing:-0.200px;transform:scaleY(1.125);transform-origin:0 2px;">Toggle</div>
<svg style="position:absolute;left:158px;top:389px" width="12" height="21" viewBox="0 0 12 21" shape-rendering="crispEdges"><rect x="0" y="0" width="1" height="1" fill="#000"/><rect x="0" y="1" width="1" height="1" fill="#000"/><rect x="1" y="1" width="1" height="1" fill="#000"/><rect x="0" y="2" width="1" height="1" fill="#000"/><rect x="1" y="2" width="1" height="1" fill="#fff"/><rect x="2" y="2" width="1" height="1" fill="#000"/><rect x="0" y="3" width="1" height="1" fill="#000"/><rect x="1" y="3" width="1" height="1" fill="#fff"/><rect x="2" y="3" width="1" height="1" fill="#fff"/><rect x="3" y="3" width="1" height="1" fill="#000"/><rect x="0" y="4" width="1" height="1" fill="#000"/><rect x="1" y="4" width="1" height="1" fill="#fff"/><rect x="2" y="4" width="1" height="1" fill="#fff"/><rect x="3" y="4" width="1" height="1" fill="#fff"/><rect x="4" y="4" width="1" height="1" fill="#000"/><rect x="0" y="5" width="1" height="1" fill="#000"/><rect x="1" y="5" width="1" height="1" fill="#fff"/><rect x="2" y="5" width="1" height="1" fill="#fff"/><rect x="3" y="5" width="1" height="1" fill="#fff"/><rect x="4" y="5" width="1" height="1" fill="#fff"/><rect x="5" y="5" width="1" height="1" fill="#000"/><rect x="0" y="6" width="1" height="1" fill="#000"/><rect x="1" y="6" width="1" height="1" fill="#fff"/><rect x="2" y="6" width="1" height="1" fill="#fff"/><rect x="3" y="6" width="1" height="1" fill="#fff"/><rect x="4" y="6" width="1" height="1" fill="#fff"/><rect x="5" y="6" width="1" height="1" fill="#fff"/><rect x="6" y="6" width="1" height="1" fill="#000"/><rect x="0" y="7" width="1" height="1" fill="#000"/><rect x="1" y="7" width="1" height="1" fill="#fff"/><rect x="2" y="7" width="1" height="1" fill="#fff"/><rect x="3" y="7" width="1" height="1" fill="#fff"/><rect x="4" y="7" width="1" height="1" fill="#fff"/><rect x="5" y="7" width="1" height="1" fill="#fff"/><rect x="6" y="7" width="1" height="1" fill="#fff"/><rect x="7" y="7" width="1" height="1" fill="#000"/><rect x="0" y="8" width="1" height="1" fill="#000"/><rect x="1" y="8" width="1" height="1" fill="#fff"/><rect x="2" y="8" width="1" height="1" fill="#fff"/><rect x="3" y="8" width="1" height="1" fill="#fff"/><rect x="4" y="8" width="1" height="1" fill="#fff"/><rect x="5" y="8" width="1" height="1" fill="#fff"/><rect x="6" y="8" width="1" height="1" fill="#fff"/><rect x="7" y="8" width="1" height="1" fill="#fff"/><rect x="8" y="8" width="1" height="1" fill="#000"/><rect x="0" y="9" width="1" height="1" fill="#000"/><rect x="1" y="9" width="1" height="1" fill="#fff"/><rect x="2" y="9" width="1" height="1" fill="#fff"/><rect x="3" y="9" width="1" height="1" fill="#fff"/><rect x="4" y="9" width="1" height="1" fill="#fff"/><rect x="5" y="9" width="1" height="1" fill="#fff"/><rect x="6" y="9" width="1" height="1" fill="#fff"/><rect x="7" y="9" width="1" height="1" fill="#fff"/><rect x="8" y="9" width="1" height="1" fill="#fff"/><rect x="9" y="9" width="1" height="1" fill="#000"/><rect x="0" y="10" width="1" height="1" fill="#000"/><rect x="1" y="10" width="1" height="1" fill="#fff"/><rect x="2" y="10" width="1" height="1" fill="#fff"/><rect x="3" y="10" width="1" height="1" fill="#fff"/><rect x="4" y="10" width="1" height="1" fill="#fff"/><rect x="5" y="10" width="1" height="1" fill="#fff"/><rect x="6" y="10" width="1" height="1" fill="#fff"/><rect x="7" y="10" width="1" height="1" fill="#fff"/><rect x="8" y="10" width="1" height="1" fill="#fff"/><rect x="9" y="10" width="1" height="1" fill="#fff"/><rect x="10" y="10" width="1" height="1" fill="#000"/><rect x="0" y="11" width="1" height="1" fill="#000"/><rect x="1" y="11" width="1" height="1" fill="#fff"/><rect x="2" y="11" width="1" height="1" fill="#fff"/><rect x="3" y="11" width="1" height="1" fill="#fff"/><rect x="4" y="11" width="1" height="1" fill="#fff"/><rect x="5" y="11" width="1" height="1" fill="#fff"/><rect x="6" y="11" width="1" height="1" fill="#fff"/><rect x="7" y="11" width="1" height="1" fill="#000"/><rect x="8" y="11" width="1" height="1" fill="#000"/><rect x="9" y="11" width="1" height="1" fill="#000"/><rect x="10" y="11" width="1" height="1" fill="#000"/><rect x="11" y="11" width="1" height="1" fill="#000"/><rect x="0" y="12" width="1" height="1" fill="#000"/><rect x="1" y="12" width="1" height="1" fill="#fff"/><rect x="2" y="12" width="1" height="1" fill="#fff"/><rect x="3" y="12" width="1" height="1" fill="#fff"/><rect x="4" y="12" width="1" height="1" fill="#000"/><rect x="5" y="12" width="1" height="1" fill="#fff"/><rect x="6" y="12" width="1" height="1" fill="#fff"/><rect x="7" y="12" width="1" height="1" fill="#000"/><rect x="0" y="13" width="1" height="1" fill="#000"/><rect x="1" y="13" width="1" height="1" fill="#fff"/><rect x="2" y="13" width="1" height="1" fill="#fff"/><rect x="3" y="13" width="1" height="1" fill="#000"/><rect x="4" y="13" width="1" height="1" fill="#000"/><rect x="5" y="13" width="1" height="1" fill="#fff"/><rect x="6" y="13" width="1" height="1" fill="#fff"/><rect x="7" y="13" width="1" height="1" fill="#000"/><rect x="0" y="14" width="1" height="1" fill="#000"/><rect x="1" y="14" width="1" height="1" fill="#fff"/><rect x="2" y="14" width="1" height="1" fill="#000"/><rect x="5" y="14" width="1" height="1" fill="#000"/><rect x="6" y="14" width="1" height="1" fill="#fff"/><rect x="7" y="14" width="1" height="1" fill="#fff"/><rect x="8" y="14" width="1" height="1" fill="#000"/><rect x="0" y="15" width="1" height="1" fill="#000"/><rect x="1" y="15" width="1" height="1" fill="#000"/><rect x="5" y="15" width="1" height="1" fill="#000"/><rect x="6" y="15" width="1" height="1" fill="#fff"/><rect x="7" y="15" width="1" height="1" fill="#fff"/><rect x="8" y="15" width="1" height="1" fill="#000"/><rect x="0" y="16" width="1" height="1" fill="#000"/><rect x="6" y="16" width="1" height="1" fill="#000"/><rect x="7" y="16" width="1" height="1" fill="#fff"/><rect x="8" y="16" width="1" height="1" fill="#fff"/><rect x="9" y="16" width="1" height="1" fill="#000"/><rect x="6" y="17" width="1" height="1" fill="#000"/><rect x="7" y="17" width="1" height="1" fill="#fff"/><rect x="8" y="17" width="1" height="1" fill="#fff"/><rect x="9" y="17" width="1" height="1" fill="#000"/><rect x="7" y="18" width="1" height="1" fill="#000"/><rect x="8" y="18" width="1" height="1" fill="#fff"/><rect x="9" y="18" width="1" height="1" fill="#fff"/><rect x="10" y="18" width="1" height="1" fill="#000"/><rect x="7" y="19" width="1" height="1" fill="#000"/><rect x="8" y="19" width="1" height="1" fill="#fff"/><rect x="9" y="19" width="1" height="1" fill="#fff"/><rect x="10" y="19" width="1" height="1" fill="#000"/><rect x="8" y="20" width="1" height="1" fill="#000"/><rect x="9" y="20" width="1" height="1" fill="#000"/></svg>
</body></html>
